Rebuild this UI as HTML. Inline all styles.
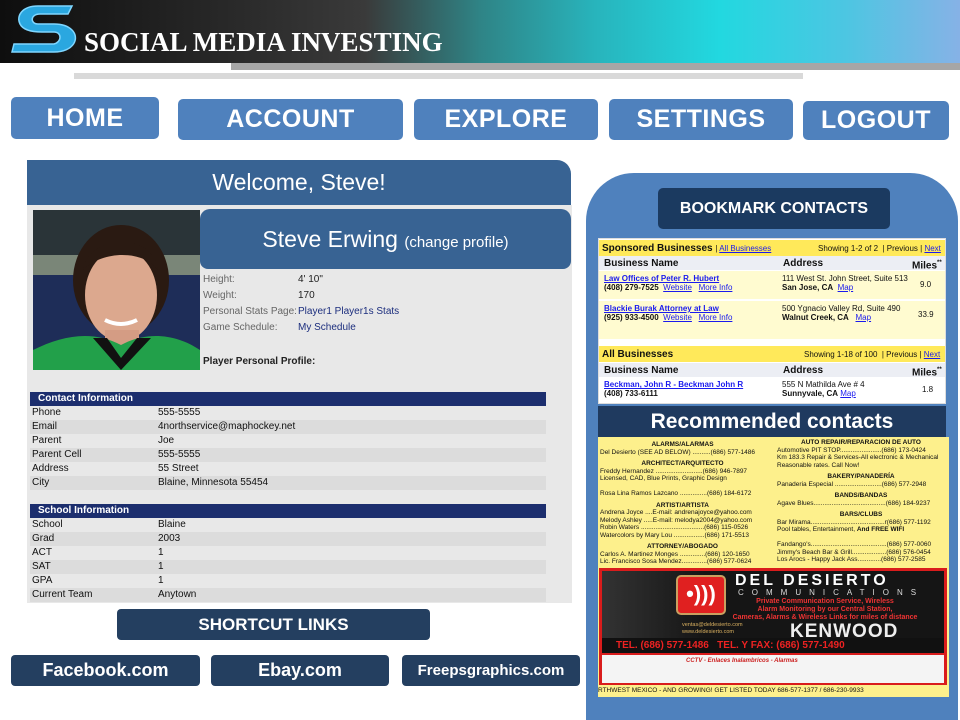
<!DOCTYPE html>
<html><head><meta charset="utf-8"><style>
*{margin:0;padding:0;box-sizing:border-box}
body{width:960px;height:720px;overflow:hidden;background:#fff;font-family:"Liberation Sans",sans-serif;position:relative}
.a{position:absolute}
.hdr{left:0;top:0;width:960px;height:63px;background:linear-gradient(90deg,#0e0e0e 0%,#2a2a2a 25%,#3a3a3a 38%,#2f8486 50%,#28b4bc 62%,#22d8e0 75%,#4cc6e2 88%,#86b2e6 100%)}
.nav{background:#4f81bd;color:#fff;font-weight:bold;font-size:25px;text-align:center;border-radius:5px;display:flex;align-items:center;justify-content:center;letter-spacing:0.5px}
.dk{background:#243f60;color:#fff;font-weight:bold;text-align:center;border-radius:4px;display:flex;align-items:center;justify-content:center}
.t{font-size:10px;color:#222;white-space:nowrap}
.row{left:30px;width:516px;height:14px;font-size:10px;color:#111}
.row span{position:absolute;top:1px}
.sh{left:30px;width:516px;height:14px;background:#1c2e6e;color:#fff;font-weight:bold;font-size:10px;padding-left:8px;line-height:14px}
.y{font-size:8px;color:#111;white-space:nowrap;line-height:9px}
.lk{color:#1a1aee;text-decoration:underline}
</style></head><body>
<div class="a hdr"></div>
<svg class="a" style="left:10px;top:2px" width="70" height="58" viewBox="0 0 70 58">
<path d="M62 4 H28 C12 4 6 14 10 22 C13 28 22 30 32 30 H44 C52 30 52 40 44 42 H4 L2 50 H44 C64 50 70 36 62 28 C58 24 52 22 44 22 H28 C20 22 20 12 30 12 H58 Z" fill="#2aa7e0" stroke="#7fd6ff" stroke-width="1.5"/>
</svg>
<div class="a" style="left:84px;top:27px;font-family:'Liberation Serif',serif;font-weight:bold;font-size:27px;color:#fff;letter-spacing:0px">SOCIAL MEDIA INVESTING</div>
<div class="a" style="left:231px;top:63px;width:729px;height:7px;background:#a6a6a6"></div>
<div class="a" style="left:74px;top:73px;width:729px;height:6px;background:#d9d9d9"></div>

<div class="a nav" style="left:11px;top:97px;width:148px;height:42px">HOME</div>
<div class="a nav" style="left:178px;top:99px;width:225px;height:41px">ACCOUNT</div>
<div class="a nav" style="left:414px;top:99px;width:184px;height:41px">EXPLORE</div>
<div class="a nav" style="left:609px;top:99px;width:184px;height:41px">SETTINGS</div>
<div class="a nav" style="left:803px;top:101px;width:146px;height:39px">LOGOUT</div>

<div class="a" style="left:27px;top:205px;width:545px;height:398px;background:#e8e8e8"></div>
<div class="a" style="left:27px;top:160px;width:544px;height:45px;background:#386393;border-top-right-radius:14px;color:#fff;font-size:23px;text-align:center;line-height:45px">Welcome, Steve!</div>
<svg class="a" style="left:33px;top:210px" width="167" height="160" viewBox="0 0 167 160">
<rect width="167" height="160" fill="#1e2d58"/>
<rect width="167" height="45" fill="#2a3438"/>
<rect y="45" width="167" height="20" fill="#7a8678"/>
<ellipse cx="88" cy="70" rx="48" ry="55" fill="#2a1a12"/>
<ellipse cx="88" cy="85" rx="36" ry="46" fill="#dca88e"/>
<path d="M50 60 C55 25 120 20 125 60 C110 40 70 40 50 60Z" fill="#2a1a12"/>
<rect x="72" y="120" width="34" height="30" fill="#d49c84"/>
<path d="M0 140 C30 125 60 120 88 135 C115 120 145 125 167 140 V160 H0Z" fill="#22a04a"/>
<path d="M60 128 L88 160 L118 128 L104 128 L88 148 L74 128Z" fill="#111"/>
<path d="M72 110 Q88 118 104 110" stroke="#fff" stroke-width="4" fill="none"/>
</svg>
<div class="a" style="left:200px;top:209px;width:371px;height:60px;background:#386393;border-radius:10px 10px 8px 8px;color:#fff;font-size:23px;text-align:center;line-height:60px">Steve Erwing <span style="font-size:15px">(change profile)</span></div>
<div class="a t" style="left:203px;top:274px;color:#666">Height:</div><div class="a t" style="left:298px;top:274px">4' 10"</div>
<div class="a t" style="left:203px;top:290px;color:#666">Weight:</div><div class="a t" style="left:298px;top:290px">170</div>
<div class="a t" style="left:203px;top:306px;color:#666">Personal Stats Page:</div><div class="a t" style="left:298px;top:306px;color:#1c2e7e">Player1 Player1s Stats</div>
<div class="a t" style="left:203px;top:322px;color:#666">Game Schedule:</div><div class="a t" style="left:298px;top:322px;color:#1c2e7e">My Schedule</div>
<div class="a t" style="left:203px;top:356px;font-weight:bold">Player Personal Profile:</div>

<div class="a sh" style="top:392px">Contact Information</div>
<div class="a row" style="top:406px"><span style="left:2px">Phone</span><span style="left:128px">555-5555</span></div>
<div class="a row" style="top:420px;background:#dcdcdc"><span style="left:2px">Email</span><span style="left:128px">4northservice@maphockey.net</span></div>
<div class="a row" style="top:434px"><span style="left:2px">Parent</span><span style="left:128px">Joe</span></div>
<div class="a row" style="top:448px;background:#dcdcdc"><span style="left:2px">Parent Cell</span><span style="left:128px">555-5555</span></div>
<div class="a row" style="top:462px"><span style="left:2px">Address</span><span style="left:128px">55 Street</span></div>
<div class="a row" style="top:476px;background:#dcdcdc"><span style="left:2px">City</span><span style="left:128px">Blaine, Minnesota 55454</span></div>
<div class="a sh" style="top:504px">School Information</div>
<div class="a row" style="top:518px"><span style="left:2px">School</span><span style="left:128px">Blaine</span></div>
<div class="a row" style="top:532px;background:#dcdcdc"><span style="left:2px">Grad</span><span style="left:128px">2003</span></div>
<div class="a row" style="top:546px"><span style="left:2px">ACT</span><span style="left:128px">1</span></div>
<div class="a row" style="top:560px;background:#dcdcdc"><span style="left:2px">SAT</span><span style="left:128px">1</span></div>
<div class="a row" style="top:574px"><span style="left:2px">GPA</span><span style="left:128px">1</span></div>
<div class="a row" style="top:588px;background:#dcdcdc"><span style="left:2px">Current Team</span><span style="left:128px">Anytown</span></div>

<div class="a dk" style="left:117px;top:609px;width:313px;height:31px;font-size:17px">SHORTCUT LINKS</div>
<div class="a dk" style="left:11px;top:655px;width:189px;height:31px;font-size:18px">Facebook.com</div>
<div class="a dk" style="left:211px;top:655px;width:178px;height:31px;font-size:18px">Ebay.com</div>
<div class="a dk" style="left:402px;top:655px;width:178px;height:31px;font-size:15px">Freepsgraphics.com</div>

<div class="a" style="left:586px;top:173px;width:372px;height:547px;background:#4f81bd;border-radius:48px 48px 0 0"></div>
<div class="a dk" style="left:658px;top:188px;width:232px;height:41px;background:#1b3a60;border-radius:5px;font-size:16px">BOOKMARK CONTACTS</div>

<div class="a" style="left:598px;top:238px;width:348px;height:166px;background:#fff;border:1px solid #ddd"></div>
<div class="a" style="left:599px;top:240px;width:346px;height:16px;background:#ffe95a"></div>
<div class="a y" style="left:602px;top:244px;font-weight:bold;font-size:10px">Sponsored Businesses <span style="font-weight:normal;font-size:8px">| <span class="lk">All Businesses</span></span></div>
<div class="a y" style="left:818px;top:244px">Showing 1-2 of 2 &nbsp;| Previous | <span class="lk">Next</span></div>
<div class="a" style="left:599px;top:256px;width:346px;height:14px;background:#eceef4"></div>
<div class="a y" style="left:604px;top:259px;font-weight:bold;font-size:10px">Business Name</div>
<div class="a y" style="left:783px;top:259px;font-weight:bold;font-size:10px">Address</div>
<div class="a y" style="left:912px;top:259px;font-weight:bold;font-size:10px">Miles<sup style="font-size:6px">**</sup></div>
<div class="a" style="left:599px;top:271px;width:346px;height:28px;background:#fffbd0"></div>
<div class="a" style="left:599px;top:301px;width:346px;height:38px;background:#fffbd0"></div>
<div class="a y" style="left:604px;top:274px"><b class="lk">Law Offices of Peter R. Hubert</b><br><b>(408) 279-7525</b> &nbsp;<span class="lk">Website</span> &nbsp; <span class="lk">More Info</span></div>
<div class="a y" style="left:782px;top:274px">111 West St. John Street, Suite 513<br><b>San Jose, CA</b> &nbsp;<span class="lk">Map</span></div>
<div class="a y" style="left:920px;top:280px">9.0</div>
<div class="a y" style="left:604px;top:304px"><b class="lk">Blackie Burak Attorney at Law</b><br><b>(925) 933-4500</b> &nbsp;<span class="lk">Website</span> &nbsp; <span class="lk">More Info</span></div>
<div class="a y" style="left:782px;top:304px">500 Ygnacio Valley Rd, Suite 490<br><b>Walnut Creek, CA</b> &nbsp; <span class="lk">Map</span></div>
<div class="a y" style="left:918px;top:310px">33.9</div>
<div class="a" style="left:599px;top:346px;width:346px;height:16px;background:#ffe95a"></div>
<div class="a y" style="left:602px;top:350px;font-weight:bold;font-size:10px">All Businesses</div>
<div class="a y" style="left:804px;top:350px">Showing 1-18 of 100 &nbsp;| Previous | <span class="lk">Next</span></div>
<div class="a" style="left:599px;top:363px;width:346px;height:14px;background:#eceef4"></div>
<div class="a y" style="left:604px;top:366px;font-weight:bold;font-size:10px">Business Name</div>
<div class="a y" style="left:783px;top:366px;font-weight:bold;font-size:10px">Address</div>
<div class="a y" style="left:912px;top:366px;font-weight:bold;font-size:10px">Miles<sup style="font-size:6px">**</sup></div>
<div class="a y" style="left:604px;top:380px"><b class="lk">Beckman, John R - Beckman John R</b><br><b>(408) 733-6111</b></div>
<div class="a y" style="left:782px;top:380px">555 N Mathilda Ave # 4<br><b>Sunnyvale, CA</b> <span class="lk">Map</span></div>
<div class="a y" style="left:922px;top:385px">1.8</div>

<div class="a" style="left:598px;top:406px;width:348px;height:31px;background:#1f3a5f;color:#fff;font-weight:bold;font-size:21px;text-align:center;line-height:31px">Recommended contacts</div>

<div class="a" style="left:598px;top:437px;width:351px;height:260px;background:#fdf08c"></div>
<div class="a y" style="left:600px;top:441px;width:165px;font-size:6.5px;line-height:7.5px">
<div style="text-align:center;font-weight:bold">ALARMS/ALARMAS</div>Del Desierto (SEE AD BELOW) ..........(686) 577-1486
<div style="text-align:center;font-weight:bold;margin-top:4px">ARCHITECT/ARQUITECTO</div>Freddy Hernandez ..........................(686) 946-7897<br>Licensed, CAD, Blue Prints, Graphic Design<br><br>Rosa Lina Ramos Lazcano ...............(686) 184-6172
<div style="text-align:center;font-weight:bold;margin-top:4px">ARTIST/ARTISTA</div>Andrena Joyce ....E-mail: andrenajoyce@yahoo.com<br>Melody Ashley .....E-mail: melodya2004@yahoo.com<br>Robin Waters ...................................(686) 115-0526<br>Watercolors by Mary Lou .................(686) 171-5513
<div style="text-align:center;font-weight:bold;margin-top:4px">ATTORNEY/ABOGADO</div>Carlos A. Martinez Monges ..............(686) 120-1650<br>Lic. Francisco Sosa Mendez..............(686) 577-0624</div>
<div class="a y" style="left:777px;top:439px;width:168px;font-size:6.5px;line-height:7.5px">
<div style="text-align:center;font-weight:bold">AUTO REPAIR/REPARACION DE AUTO</div>Automotive PIT STOP.......................(686) 173-0424<br>Km 183.3 Repair &amp; Services-All electronic &amp; Mechanical<br>Reasonable rates. Call Now!
<div style="text-align:center;font-weight:bold;margin-top:4px">BAKERY/PANADERÍA</div>Panaderia Especial ..........................(686) 577-2948
<div style="text-align:center;font-weight:bold;margin-top:4px">BANDS/BANDAS</div>Agave Blues........................................(686) 184-9237
<div style="text-align:center;font-weight:bold;margin-top:4px">BARS/CLUBS</div>Bar Mirama.........................................r(686) 577-1192<br>Pool tables, Entertainment, <b>And FREE WIFI</b><br><br>Fandango's..........................................(686) 577-0060<br>Jimmy's Beach Bar &amp; Grill...................(686) 576-0454<br>Los Arocs - Happy Jack Ass.............(686) 577-2585</div>

<div class="a" style="left:599px;top:568px;width:348px;height:117px;background:#d91c1c"></div>
<div class="a" style="left:602px;top:571px;width:342px;height:77px;background:linear-gradient(90deg,#333,#151515 30%,#151515)"></div>
<div class="a" style="left:676px;top:575px;width:50px;height:40px;background:#e02020;border-radius:5px;border:2px solid #c9a060;color:#fff;font-size:22px;text-align:center;line-height:34px;font-weight:bold">•)))</div>
<div class="a" style="left:735px;top:572px;color:#fff;font-weight:bold;font-size:16px;letter-spacing:3px">DEL DESIERTO</div>
<div class="a" style="left:738px;top:588px;color:#ddd;font-size:8px;letter-spacing:8px">COMMUNICATIONS</div>
<div class="a y" style="left:710px;top:598px;color:#e33;font-weight:bold;font-size:7px;line-height:8px;text-align:center;width:230px">Private Communication Service, Wireless<br>Alarm Monitoring by our Central Station,<br>Cameras, Alarms &amp; Wireless Links for miles of distance</div>
<div class="a" style="left:790px;top:622px;color:#eee;font-size:19px;font-weight:bold;letter-spacing:1px;line-height:20px">KENWOOD</div>
<div class="a y" style="left:682px;top:622px;color:#d9b060;font-size:5.5px;line-height:7px">ventas@deldesierto.com<br>www.deldesierto.com</div>
<div class="a" style="left:602px;top:638px;width:342px;height:15px;background:#111;color:#e22;font-size:10px;font-weight:bold;line-height:15px;padding-left:14px;white-space:nowrap">TEL. (686) 577-1486 &nbsp; TEL. Y FAX: (686) 577-1490</div>
<div class="a" style="left:602px;top:655px;width:342px;height:28px;background:#f4f4f4"></div>
<div class="a y" style="left:686px;top:657px;color:#c22;font-style:italic;font-weight:bold;font-size:6px">CCTV - Enlaces Inalambricos - Alarmas</div>
<div class="a y" style="left:598px;top:686px;font-size:6.5px">RTHWEST MEXICO - AND GROWING! GET LISTED TODAY 686-577-1377 / 686-230-9933</div>
</body></html>
